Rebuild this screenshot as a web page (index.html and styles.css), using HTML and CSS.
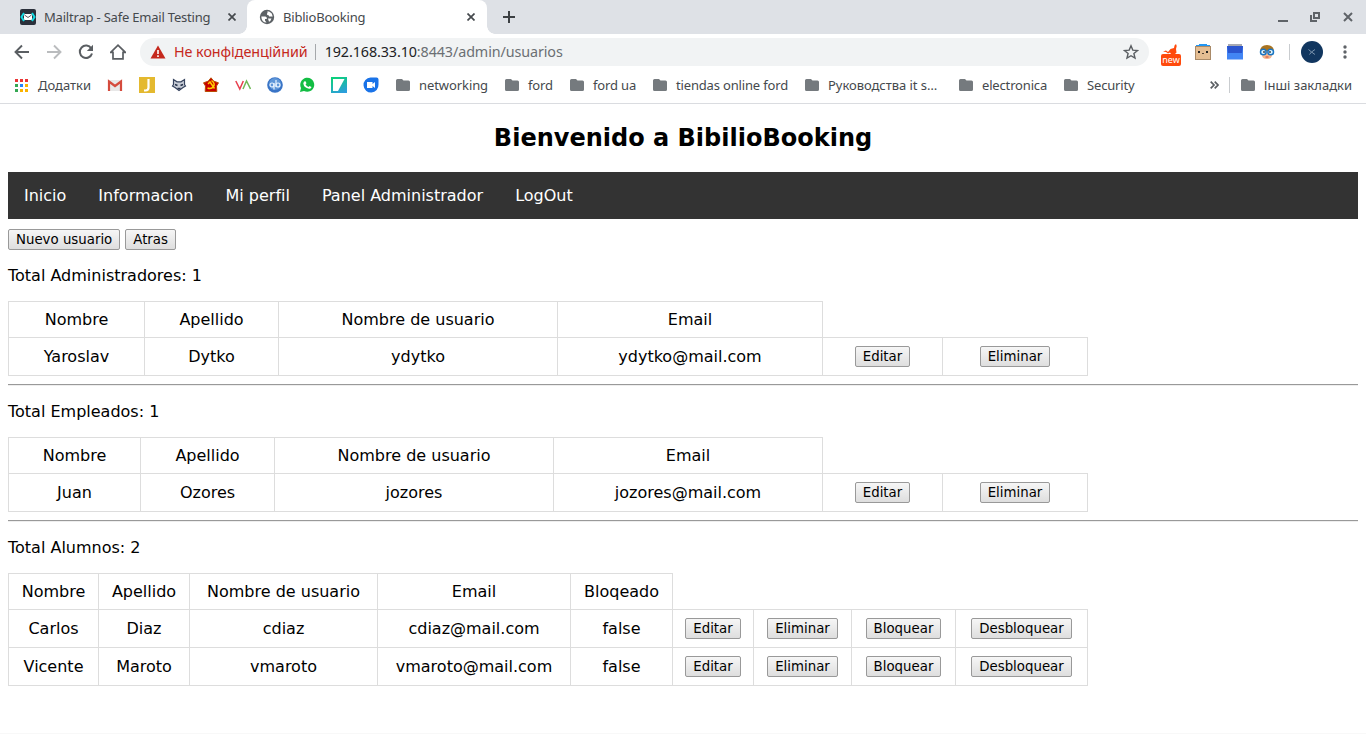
FILE: index.html
```html
<!DOCTYPE html>
<html lang="es">
<head>
<meta charset="utf-8">
<title>BiblioBooking</title>
<link rel="stylesheet" href="styles.css">
</head>
<body>
<svg class="defs" width="0" height="0">
  <symbol id="folder" viewBox="0 0 14 12"><path fill="#757a7e" d="M1.5 0H6l1.500 1.500h5A1.500 1.500 0 0 1 14 3v7.500a1.500 1.500 0 0 1-1.500 1.500h-11A1.500 1.500 0 0 1 0 10.500v-9A1.500 1.500 0 0 1 1.500 0z"/></symbol>
  <symbol id="close" viewBox="0 0 8 8"><path d="M.5.5l7 7M7.500.5l-7 7" stroke="#45494d" stroke-width="1.700"/></symbol>
</svg>
<header class="browser">
  <div class="tabstrip">
    <div class="tab">
      <svg class="favicon" viewBox="0 0 16 16"><rect width="16" height="16" rx="2" fill="#2b303b"/><path d="M4 4L1.500 8 4 12M12 4l2.500 4L12 12" fill="none" stroke="#12dbe3" stroke-width="2"/><rect x="4" y="5" width="8" height="6" rx="1" fill="#fff"/><path d="M4.500 6L8 8.500 11.500 6" fill="none" stroke="#2b303b" stroke-width=".8"/></svg>
      <span class="tab-title">Mailtrap - Safe Email Testing</span>
      <svg class="tab-close"><use href="#close"/></svg>
    </div>
    <div class="tab tab-active">
      <svg class="favicon" viewBox="0 0 16 16"><circle cx="8" cy="8" r="7.200" fill="#5c6165"/><path d="M2.300 7.500h4q2 .3 1.500 2.500H6v1.500l1.500 2Q2.500 13.500 2.300 7.500zM8.500 2.300v1.500q-1.500 2 1 2.500l.8 1.200h3.400q-.3-3.500-3.200-4.700z" fill="#fff"/><path d="M9 9.500h3.500q-.8 2.800-2.500 3.300z" fill="#fff"/></svg>
      <span class="tab-title">BiblioBooking</span>
      <svg class="tab-close"><use href="#close"/></svg>
    </div>
    <svg class="new-tab" viewBox="0 0 12 12"><path d="M6 0v12M0 6h12" stroke="#3c4043" stroke-width="2"/></svg>
    <div class="window-buttons">
      <svg width="10" height="10"><path d="M0 9h10" stroke="#5f6368" stroke-width="2"/></svg>
      <svg width="10" height="10"><path d="M4 1h5v5H4zM1 3v6h6" fill="none" stroke="#5f6368" stroke-width="2"/></svg>
      <svg width="10" height="10"><path d="M1 1l8 8M9 1L1 9" stroke="#5f6368" stroke-width="2"/></svg>
    </div>
  </div>
  <div class="toolbar">
    <div class="nav-icons">
      <svg viewBox="0 0 16 16"><path d="M15 8H2M8 1.500L1.500 8 8 14.500" fill="none" stroke="#5a5e62" stroke-width="1.900"/></svg>
      <svg viewBox="0 0 16 16"><path d="M1 8h13M8 1.500L14.500 8 8 14.500" fill="none" stroke="#babcbe" stroke-width="1.900"/></svg>
      <svg viewBox="0 0 16 16"><path d="M13.300 4.500A6.200 6.200 0 1 0 14 9.500" fill="none" stroke="#5a5e62" stroke-width="2"/><path d="M15 .8V7H8.800z" fill="#5a5e62"/></svg>
      <svg viewBox="0 0 16 16"><path d="M.7 8.300L8 1.200l7.300 7.100H13v6.500H3V8.300z" fill="none" stroke="#5a5e62" stroke-width="1.700"/></svg>
    </div>
    <div class="omnibox">
      <svg class="warning" viewBox="0 0 16 14"><path d="M8 .5L15.500 13.500H.5z" fill="#c5281c"/><path d="M8 5v4M8 10.200v1.700" stroke="#fff" stroke-width="1.600"/></svg>
      <span class="insecure">Не конфіденційний</span>
      <span class="address">192.168.33.10<span class="path">:8443/admin/usuarios</span></span>
      <svg class="star" viewBox="0 0 16 16"><path d="M8 1.800l1.800 4.300 4.700.4-3.600 3 1.100 4.600L8 11.700l-4 2.400 1.100-4.600-3.600-3 4.700-.4z" fill="none" stroke="#5a5e62" stroke-width="1.400"/></svg>
    </div>
    <div class="extensions">
      <div class="extension-new"><svg viewBox="0 0 16 10"><path d="M0 7.500l3-1 2 1.500 2.500-3L11 4l.5-2.500L13 0l.7 2L13 5l.5 3.500L12 10H8L7 8.500 5 9.500 3 8z" fill="#ff4a0c"/></svg><span>new</span></div>
      <svg viewBox="0 0 16 16"><path d="M4 0h8v1h3v3H1V1h3z" fill="#2196f3"/><rect x=".5" y="2.500" width="15" height="13" fill="#e4bd92" stroke="#a98a68"/><path d="M3 7h2v2H3zM11 7h2v2h-2z" fill="#222"/><path d="M7 9l1 1 1-1" fill="none" stroke="#543"/></svg>
      <svg viewBox="0 0 16 16"><path d="M1 0h14v4H1z" fill="#a7a9b2"/><path d="M0 2h16v13.500H0z" fill="#4285f4"/><path d="M0 2h16l-1 7H1z" fill="#2b55cf"/></svg>
      <svg viewBox="0 0 16 16"><path d="M1 8Q1 1 8 1t7 7l-1 3H2z" fill="#a9731f"/><path d="M3 7h10v4q0 4-5 4t-5-4z" fill="#f4b68e"/><g fill="#e4f7ff" stroke="#1976c5" stroke-width="1.500"><circle cx="4.300" cy="8" r="2.800"/><circle cx="11.700" cy="8" r="2.800"/></g><circle cx="5" cy="8" r=".9" fill="#234"/><circle cx="11" cy="8" r=".9" fill="#234"/><path d="M6.500 13h3" stroke="#c43"/></svg>
    </div>
    <svg class="avatar" viewBox="0 0 22 22"><circle cx="11" cy="11" r="11" fill="#11365f"/><path d="M7.500 8.500l3 2.500 3.500-2.500M8.500 13.500l2-2.500 3.500 2.500" fill="none" stroke="#7c95ae"/></svg>
    <svg class="menu" viewBox="0 0 4 14"><g fill="#5f6368"><circle cx="2" cy="2" r="1.700"/><circle cx="2" cy="7" r="1.700"/><circle cx="2" cy="12" r="1.700"/></g></svg>
  </div>
  <div class="bookmarks">
    <svg class="apps" viewBox="0 0 13 13"><path fill="#ea3535" d="M0 0h3v3H0zM5 0h3v3H5zM10 0h3v3h-3z"/><path fill="#34a853" d="M0 5h3v3H0zM0 10h3v3H0z"/><path fill="#2684fc" d="M5 5h3v3H5z"/><path fill="#fbb300" d="M10 5h3v3h-3zM5 10h3v3H5zM10 10h3v3h-3z"/></svg>
    <span class="apps-label">Додатки</span>
    <div class="site-icons">
      <svg viewBox="0 0 16 16"><path d="M2 3h12v11H2z" fill="#e8e8e8"/><path d="M2 14V4.500L8 9l6-4.500V14" fill="none" stroke="#d54b3d" stroke-width="2.200"/></svg>
      <svg viewBox="0 0 16 16"><path d="M0 0h16v16H0z" fill="#e4b92f"/><path d="M9.500 2v8.500q0 3-3 3H5" fill="none" stroke="#fff" stroke-width="2.200"/></svg>
      <svg viewBox="0 0 16 16"><path d="M2.500 2.500L6 4.800h4l3.500-2.300v5l1 1.500-2.500 1.500-4 3-4-3L1.500 9l1-1.500z" fill="#c9ced8" stroke="#37445f" stroke-width="1.200"/><path d="M4 7.500l2.500 1M12 7.500l-2.500 1M6.500 11.500h3" stroke="#26324a" stroke-width="1.500"/></svg>
      <svg viewBox="0 0 16 16"><path d="M8 .8l2.800 3.400 4.700 1.600L13.500 9l.3 5.500H2.200L2.500 9 .5 5.800l4.700-1.600z" fill="#c80000" stroke="#b94d04"/><path d="M8.500 3.500q4 3 2 6T4.500 11M5 7l2-2 4.500 6.500" fill="none" stroke="#ffd000" stroke-width="1.500"/></svg>
      <svg viewBox="0 0 16 16"><path d="M.8 4l4 8 3.500-8" fill="none" stroke="#e73e4d" stroke-width="1.500"/><path d="M8 12l3.500-8 4 8" fill="none" stroke="#70b957" stroke-width="1.500"/></svg>
      <svg viewBox="0 0 16 16"><circle cx="8" cy="8" r="7.800" fill="#3974c6"/><circle cx="8" cy="7" r="6" fill="#5e96d8"/><g fill="none" stroke="#e8f3ff" stroke-width="1.200"><circle cx="5" cy="8" r="2"/><circle cx="11" cy="8" r="2"/><path d="M7 6v6.500M9 3v7"/></g></svg>
      <svg viewBox="0 0 16 16"><path d="M1 15l1-4A7 7 0 1 1 5 14z" fill="#12bd43"/><path d="M5 4.500l1.500-.2 1 2-1 1q1 2 3 2.700l1-1 2 1q-.2 2-2.500 1.700Q5 11 4.300 6.500z" fill="#fff"/></svg>
      <svg viewBox="0 0 16 16"><defs><linearGradient id="sheet" x1=".3" x2=".7" y2="1"><stop stop-color="#0bd17b"/><stop offset="1" stop-color="#2d9ddd"/></linearGradient></defs><path d="M0 0h16v16H0z" fill="url(#sheet)"/><path d="M2 2h11.500L7 14H2z" fill="#fff"/></svg>
      <svg viewBox="0 0 16 16"><path d="M7.500.5h6q2 0 2 2v5a7.500 7.500 0 1 1-8-7z" fill="#1a73e8"/><path d="M4 5h5.500v2L12 5v6L9.500 9v2H4z" fill="#fff"/></svg>
    </div>
    <div class="folders">
      <span class="folder f-networking"><svg><use href="#folder"/></svg>networking</span>
      <span class="folder f-ford"><svg><use href="#folder"/></svg>ford</span>
      <span class="folder f-ford-ua"><svg><use href="#folder"/></svg>ford ua</span>
      <span class="folder f-tiendas"><svg><use href="#folder"/></svg>tiendas online ford</span>
      <span class="folder f-it"><svg><use href="#folder"/></svg>Руководства it s…</span>
      <span class="folder f-electronica"><svg><use href="#folder"/></svg>electronica</span>
      <span class="folder"><svg><use href="#folder"/></svg>Security</span>
    </div>
    <svg class="overflow" viewBox="0 0 9 8"><path d="M.7.700L4 4 .7 7.300M4.700.700L8 4 4.700 7.300" fill="none" stroke="#5a5e62" stroke-width="1.700"/></svg>
    <span class="folder folder-other"><svg><use href="#folder"/></svg>Інші закладки</span>
  </div>
</header>
<main class="page">
  <h2 class="heading">Bienvenido a BibilioBooking</h2>
  <nav class="site-nav"><a>Inicio</a><a>Informacion</a><a>Mi perfil</a><a>Panel Administrador</a><a>LogOut</a></nav>
  <div class="actions"><button>Nuevo usuario</button><button>Atras</button></div>

  <p class="total">Total Administradores: 1</p>
  <table class="users admins">
    <colgroup><col class="c1"><col class="c2"><col class="c3"><col class="c4"><col class="c5"><col class="c6"></colgroup>
    <tr class="head"><td>Nombre</td><td>Apellido</td><td>Nombre de usuario</td><td>Email</td></tr>
    <tr><td>Yaroslav</td><td>Dytko</td><td>ydytko</td><td>ydytko@mail.com</td><td><button>Editar</button></td><td><button>Eliminar</button></td></tr>
  </table>
  <hr>
  <p class="total">Total Empleados: 1</p>
  <table class="users staff">
    <colgroup><col class="c1"><col class="c2"><col class="c3"><col class="c4"><col class="c5"><col class="c6"></colgroup>
    <tr class="head"><td>Nombre</td><td>Apellido</td><td>Nombre de usuario</td><td>Email</td></tr>
    <tr><td>Juan</td><td>Ozores</td><td>jozores</td><td>jozores@mail.com</td><td><button>Editar</button></td><td><button>Eliminar</button></td></tr>
  </table>
  <hr>
  <p class="total">Total Alumnos: 2</p>
  <table class="users students">
    <colgroup><col class="c1"><col class="c2"><col class="c3"><col class="c4"><col class="c5"><col class="c6"><col class="c7"><col class="c8"><col class="c9"></colgroup>
    <tr class="head"><td>Nombre</td><td>Apellido</td><td>Nombre de usuario</td><td>Email</td><td>Bloqeado</td></tr>
    <tr><td>Carlos</td><td>Diaz</td><td>cdiaz</td><td>cdiaz@mail.com</td><td>false</td><td><button>Editar</button></td><td><button>Eliminar</button></td><td><button>Bloquear</button></td><td><button>Desbloquear</button></td></tr>
    <tr><td>Vicente</td><td>Maroto</td><td>vmaroto</td><td>vmaroto@mail.com</td><td>false</td><td><button>Editar</button></td><td><button>Eliminar</button></td><td><button>Bloquear</button></td><td><button>Desbloquear</button></td></tr>
  </table>
</main>
</body>
</html>
```

FILE: styles.css
```css
* { box-sizing: border-box; }
html, body { margin: 0; height: 734px; overflow: hidden; background: #fff; }
body { display: flex; flex-direction: column; }
svg { display: block; flex: none; }
.defs { display: none; }

.browser { flex: none; height: 104px; font: 13px "Noto Sans", sans-serif; color: #45494d; border-bottom: 1px solid #dadce0; white-space: nowrap; }
.tabstrip { display: flex; align-items: center; height: 34px; padding-left: 7px; background: #dee1e6; }
.tab { display: flex; align-items: center; width: 240px; height: 34px; padding: 0 11px 0 13px; }
.tab-active { position: relative; padding-left: 12px; border-radius: 8px 8px 0 0; background: #fff; }
.tab-active::before, .tab-active::after { content: ""; position: absolute; bottom: 0; width: 8px; height: 8px; }
.tab-active::before { left: -8px; background: radial-gradient(circle at 0 0, transparent 7.5px, #fff 8px); }
.tab-active::after { right: -8px; background: radial-gradient(circle at 100% 0, transparent 7.5px, #fff 8px); }
.favicon { width: 16px; height: 16px; margin-right: 8px; }
.tab-title { letter-spacing: -0.2px; }
.tab-close { width: 8px; height: 8px; margin-left: auto; }
.tab-active .tab-close { margin-right: 1px; }
.new-tab { width: 12px; height: 12px; margin-left: 16px; }
.window-buttons { display: flex; gap: 23px; margin-left: auto; padding-right: 13px; }
.window-buttons svg:first-child { margin-right: -1px; }

.toolbar { display: flex; align-items: center; height: 36px; }
.nav-icons { display: flex; gap: 16px; padding: 0 14px; }
.nav-icons svg { width: 16px; height: 16px; }
.omnibox { display: flex; align-items: center; flex: none; width: 1009px; height: 28px; padding: 0 10px; border-radius: 14px; background: #f1f3f4; font-size: 14.33px; line-height: 18px; }
.warning { width: 16px; height: 14px; margin-right: 8px; }
.insecure { height: 16px; line-height: 16px; padding-right: 7px; border-right: 1px solid #a5a8ab; color: #c5281c; letter-spacing: -0.05px; }
.address { margin-left: 9px; color: #202124; letter-spacing: -0.1px; }
.path { color: #6b6f73; }
.star { width: 16px; height: 16px; margin-left: auto; }
.extensions { display: flex; align-items: center; flex: none; width: 141px; height: 16px; padding-left: 12px; gap: 14px; border-right: 1px solid #c9cccf; }
.extensions > svg { width: 16px; height: 16px; margin-right: 2px; }
.extension-new { width: 20px; height: 22px; margin-top: 6px; }
.extension-new svg { width: 16px; height: 10px; margin-left: 2px; }
.extension-new span { display: block; height: 12px; border-radius: 2px; background: #ff4a0c; color: #fff; font-size: 9px; line-height: 11px; text-align: center; }
.avatar { width: 22px; height: 22px; margin-left: 11px; }
.menu { width: 4px; height: 14px; margin-left: 20px; }

.bookmarks { display: flex; align-items: center; height: 30px; padding-left: 15px; }
.apps { width: 13px; height: 13px; }
.apps-label { width: 69px; margin-left: 10px; }
.site-icons { display: flex; gap: 16px; }
.site-icons svg { width: 16px; height: 16px; }
.folders { display: flex; margin-left: 17px; letter-spacing: -0.16px; }
.folder { display: flex; align-items: center; gap: 9px; }
.folder svg { width: 14px; height: 12px; }
.f-networking { width: 109px; letter-spacing: -0.08px; }
.f-ford { width: 65px; }
.f-ford-ua { width: 83px; }
.f-tiendas { width: 152px; }
.f-it { width: 154px; letter-spacing: -0.05px; }
.f-electronica { width: 105px; }
.overflow { width: 9px; height: 8px; margin-left: auto; }
.folder-other { height: 16px; margin-left: 10px; padding: 0 14px 0 11px; border-left: 1px solid #c9cccf; }

.page { flex: 1; padding: 0 8px; font: 16px/19px "DejaVu Sans", sans-serif; color: #000; border-bottom: 1px solid #f8f8f8; }
.heading { margin: 20px 0; font-size: 24px; line-height: 28px; text-align: center; }
.site-nav { display: flex; height: 47px; background: #333; color: #fff; }
.site-nav a { padding: 14px 16px; }
.actions { display: flex; gap: 5px; margin-top: 10px; }
button { height: 21px; padding: 0 7px; border: 1px solid #999; border-radius: 2px; background: linear-gradient(#f6f6f6, #dedede); color: #000; font: 13.33px/17px "DejaVu Sans", sans-serif; vertical-align: top; }
.total { margin: 16px 0; }
hr { height: 2px; margin: 8px 0 16px; border: 0; border-top: 1px solid #999; border-bottom: 1px solid #eee; }

.users { width: 1080px; border-collapse: collapse; table-layout: fixed; text-align: center; }
.users tr { height: 38px; }
.users .head { height: 36px; }
.users td { padding: 0; border: 1px solid #ddd; }
.users button { display: block; margin: 0 auto; }
.c1 { width: 136px; }
.c2 { width: 134px; }
.c3 { width: 279px; }
.c4 { width: 265px; }
.c5 { width: 120px; }
.c6 { width: 145px; }
.staff .c1 { width: 132px; }
.staff .c4 { width: 269px; }
.students .c1 { width: 90px; }
.students .c2 { width: 91px; }
.students .c3 { width: 188px; }
.students .c4 { width: 193px; }
.students .c5 { width: 102px; }
.students .c6 { width: 81px; }
.students .c7 { width: 98px; }
.students .c8 { width: 104px; }
.students .c9 { width: 132px; }
```
